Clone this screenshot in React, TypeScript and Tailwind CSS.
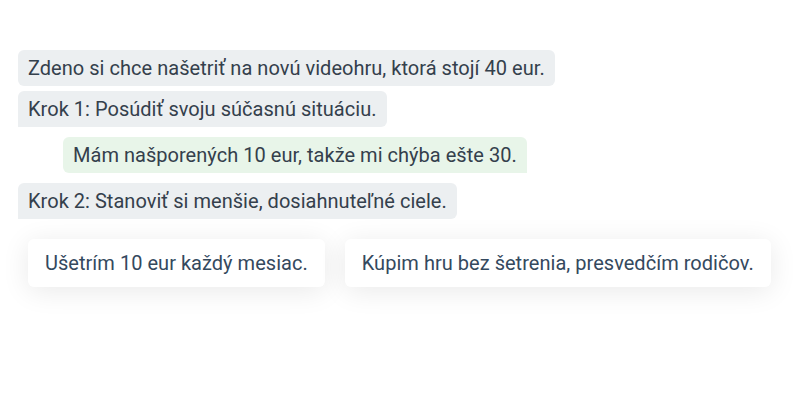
import React from 'react';

const messages = [
  { text: 'Zdeno si chce našetriť na novú videohru, ktorá stojí 40 eur.', kind: 'bot', first: true },
  { text: 'Krok 1: Posúdiť svoju súčasnú situáciu.', kind: 'bot' },
  { text: 'Mám našporených 10 eur, takže mi chýba ešte 30.', kind: 'user' },
  { text: 'Krok 2: Stanoviť si menšie, dosiahnuteľné ciele.', kind: 'bot' },
];

const choices = ['Ušetrím 10 eur každý mesiac.', 'Kúpim hru bez šetrenia, presvedčím rodičov.'];

export default function App() {
  return (
    <div
      className="w-[800px] h-[400px] bg-white pt-[50px] pl-[18px] text-[#34404c] overflow-hidden"
      style={{ fontFamily: 'Roboto, "Noto Sans", sans-serif' }}
    >
      <div className="flex flex-col items-start">
        {messages.map((m, i) =>
          m.kind === 'user' ? (
            <div
              key={i}
              className="ml-[45px] mt-[10px] mb-[5px] bg-[#e8f5e9] rounded-md rounded-br-none px-[10px] h-[36px] flex items-center text-[20px] leading-6 tracking-[0.03px]"
            >
              {m.text}
            </div>
          ) : (
            <div
              key={i}
              className={`bg-[#eceff1] rounded-md ${m.first ? '' : 'rounded-bl-none'} px-[10px] h-[36px] flex items-center text-[20px] leading-6 tracking-[0.03px] ${i === 0 ? '' : 'mt-[5px]'}`}
            >
              {m.text}
            </div>
          )
        )}
      </div>

      <div className="flex gap-5 ml-[10px] mt-5">
        {choices.map(c => (
          <button
            key={c}
            className="bg-white rounded-md h-12 px-[17px] text-[20px] tracking-[0.03px] text-[#34495e] shadow-[0_4px_28px_rgba(0,0,0,0.09)]"
          >
            {c}
          </button>
        ))}
      </div>
    </div>
  );
}
